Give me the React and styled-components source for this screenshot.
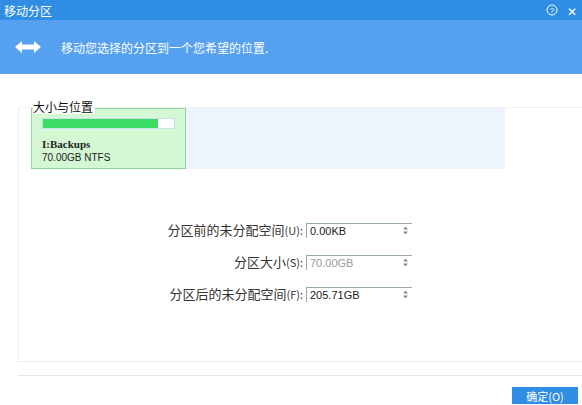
import React from 'react'
import styled, { createGlobalStyle } from 'styled-components'

const Global = createGlobalStyle`
  body { margin: 0; font-family: "Microsoft YaHei", "Noto Sans CJK SC", sans-serif; background: #fff; }
  * { box-sizing: border-box; }
`

const Window = styled.div`
  width: 582px;
  height: 405px;
  overflow: hidden;
  display: flex;
  flex-direction: column;
  position: relative;
`

const TitleBar = styled.div`
  height: 20px;
  background: #2f8de4;
  color: #fff;
  font-size: 12px;
  display: flex;
  align-items: center;
  padding-left: 4px;
`

const Title = styled.span`
  flex: 1;
`

const TitleBtn = styled.span`
  width: 20px;
  display: flex;
  justify-content: center;
  font-size: 12px;
`

const Banner = styled.div`
  height: 54px;
  background: #56a1ef;
  display: flex;
  align-items: center;
  padding-left: 15px;
  gap: 20px;
  color: #fff;
  font-size: 12px;
`

const Body = styled.div`
  flex: 1;
  padding: 33px 0 0 18px;
  display: flex;
  flex-direction: column;
`

const Group = styled.div`
  height: 255px;
  border-left: 1px solid #ececec;
  border-bottom: 1px solid #ececec;
  border-top: 1px solid #f3f3f3;
  position: relative;
  padding: 0 0 0 12px;
`

const GroupLabel = styled.span`
  position: absolute;
  top: -8px;
  left: 14px;
  font-size: 12px;
  color: #111;
  background: #fff;
  line-height: 14px;
  padding-right: 2px;
`

const DiskMap = styled.div`
  width: 474px;
  height: 61px;
  background: #eef4fd;
  display: flex;
`

const Part = styled.div`
  width: 155px;
  background: #d4f7d4;
  border: 1px solid #8fd89a;
  padding: 9px 10px 0 10px;
  font-family: "Liberation Sans", "Noto Sans CJK SC", sans-serif;
  font-size: 10px;
  color: #222;
`

const Bar = styled.div`
  height: 11px;
  background: #fff;
  border: 1px solid #cde;
  margin-bottom: 9px;
`

const BarFill = styled.div`
  height: 100%;
  background: #3ddc65;
`

const PartName = styled.div`
  font-family: "Liberation Serif", serif;
  font-weight: bold;
  font-size: 11px;
  margin-bottom: 2px;
`

const Form = styled.div`
  display: grid;
  grid-template-columns: 272px 106px;
  column-gap: 3px;
  row-gap: 14px;
  margin-top: 52px;
  align-items: center;
`

const Label = styled.span`
  text-align: right;
  font-size: 13px;
  line-height: 17px;
  color: #333;
`

const Small = styled.span`
  font-size: 11px;
`

const Input = styled.div`
  height: 15px;
  border-left: 1px solid #9aa;
  border-top: 1px solid #9aa;
  display: flex;
  align-items: center;
  justify-content: space-between;
  padding: 0 4px 0 3px;
  font-family: "Liberation Sans", sans-serif;
  font-size: 11px;
  color: ${p => (p.disabled ? '#999' : '#222')};
  background: #fff;
`

const Footer = styled.div`
  border-top: 1px solid #e6e6e6;
  margin-top: 13px;
  height: 29px;
  display: flex;
  justify-content: flex-end;
  align-items: flex-end;
  padding-right: 4px;
`

const OkButton = styled.button`
  width: 66px;
  height: 17px;
  border: none;
  background: #2f8de4;
  color: #fff;
  font-size: 11px;
  font-family: inherit;
  padding: 0;
`

const Spinner = () => (
  <svg width="5" height="9" viewBox="0 0 5 9">
    <path d="M0 3.5 L2.5 0.5 L5 3.5 Z M0 5.5 L2.5 8.5 L5 5.5 Z" fill="#7a8fa6" />
  </svg>
)

const fields = [
  ['分区前的未分配空间', '(U):', '0.00KB', false],
  ['分区大小', '(S):', '70.00GB', true],
  ['分区后的未分配空间', '(F):', '205.71GB', false]
]

export default function App() {
  return (
    <Window>
      <Global />
      <TitleBar>
        <Title>移动分区</Title>
        <TitleBtn>
          <svg width="12" height="12" viewBox="0 0 12 12">
            <circle cx="6" cy="6" r="5" fill="none" stroke="#fff" />
            <text x="6" y="9" fontSize="8" fill="#fff" textAnchor="middle" fontFamily="Liberation Sans">?</text>
          </svg>
        </TitleBtn>
        <TitleBtn>✕</TitleBtn>
      </TitleBar>
      <Banner>
        <svg width="26" height="12" viewBox="0 0 26 12">
          <path d="M0 6 L7 0 V3.5 H19 V0 L26 6 L19 12 V8.5 H7 V12 Z" fill="#fff" />
        </svg>
        <span>移动您选择的分区到一个您希望的位置.</span>
      </Banner>
      <Body>
        <Group>
          <GroupLabel>大小与位置</GroupLabel>
          <DiskMap>
            <Part>
              <Bar>
                <BarFill style={{ width: '88%' }} />
              </Bar>
              <PartName>I:Backups</PartName>
              <div>70.00GB NTFS</div>
            </Part>
          </DiskMap>
          <Form>
            {fields.map(([name, key, value, disabled]) => (
              <React.Fragment key={key}>
                <Label>
                  {name}
                  <Small>{key}</Small>
                </Label>
                <Input disabled={disabled}>
                  <span>{value}</span>
                  <Spinner />
                </Input>
              </React.Fragment>
            ))}
          </Form>
        </Group>
        <Footer>
          <OkButton>确定(O)</OkButton>
        </Footer>
      </Body>
    </Window>
  )
}
